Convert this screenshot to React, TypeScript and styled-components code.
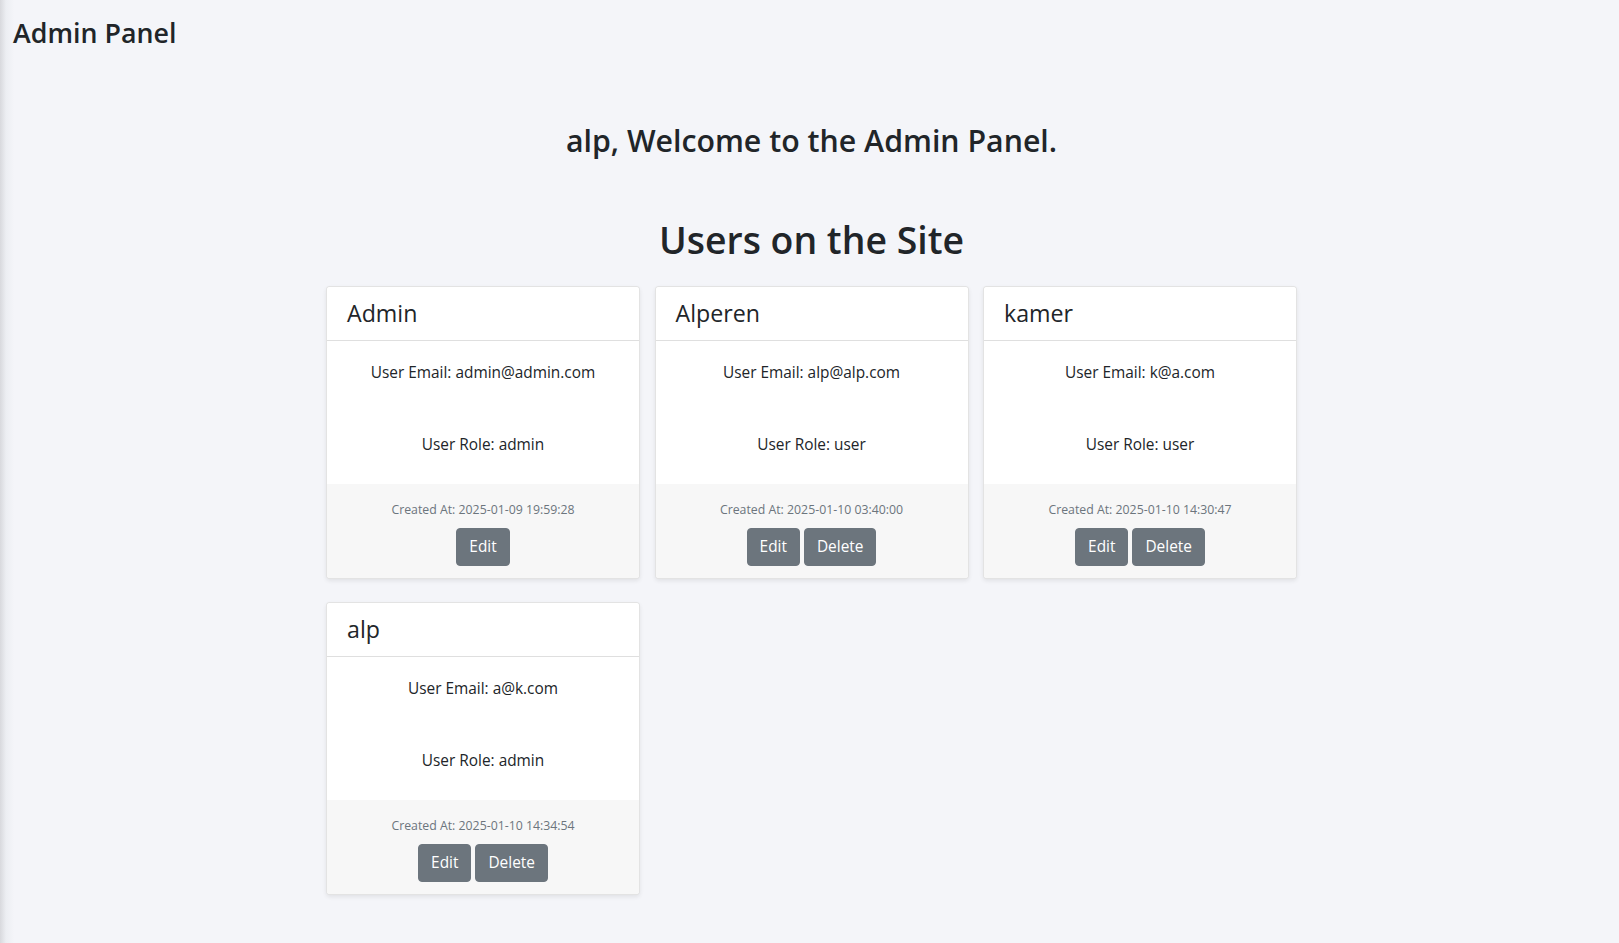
import React from "react";
import styled, { createGlobalStyle } from "styled-components";

const GlobalStyle = createGlobalStyle`
  html, body {
    margin: 0;
    padding: 0;
  }
  body {
    background: #f4f5f9;
    font-family: "Open Sans", "Noto Sans", "Liberation Sans", sans-serif;
    color: #212529;
  }
  * { box-sizing: border-box; }
`;

const Page = styled.div`
  min-height: 100vh;
  background: linear-gradient(to right, #d8d9dd 0px, #eceef2 6px, #f4f5f9 14px);
  padding-bottom: 40px;
`;

const Brand = styled.div`
  font-size: 26.8px;
  line-height: 34px;
  padding: 16px 0 0 13px;
  font-weight: 600;
`;

const Welcome = styled.h2`
  margin: 72px 0 0;
  padding-left: 4px;
  font-size: 30.3px;
  line-height: 38px;
  font-weight: 600;
  text-align: center;
`;

const Title = styled.h1`
  margin: 56px 0 0;
  padding-left: 4px;
  font-size: 37.4px;
  line-height: 48px;
  font-weight: 600;
  text-align: center;
`;

const Grid = styled.div`
  margin-top: 22px;
  padding-left: 4px;
  display: grid;
  grid-template-columns: repeat(3, 314px);
  column-gap: 14.5px;
  row-gap: 23.5px;
  justify-content: center;
`;

const Card = styled.div`
  background: #fff;
  border: 1px solid rgba(0, 0, 0, 0.11);
  border-radius: 4px;
  box-shadow: 0 2px 4px rgba(0, 0, 0, 0.08);
  overflow: hidden;
  display: flex;
  flex-direction: column;
`;

const CardHeader = styled.div`
  padding: 12px 20px;
  border-bottom: 1px solid rgba(0, 0, 0, 0.125);
  background: #fff;
`;

const CardName = styled.h4`
  margin: 0;
  font-size: 23.2px;
  line-height: 28.8px;
  font-weight: 400;
`;

const CardBody = styled.div`
  padding: 20px 20px 27px;
  text-align: center;
  display: flex;
  flex-direction: column;
  gap: 48px;
`;

const InfoLine = styled.p`
  margin: 0;
  font-size: 15.4px;
  line-height: 24px;
`;

const CardFooter = styled.div`
  padding: 14px 20px 12px;
  background: #f7f7f7;
  text-align: center;
`;

const Created = styled.p`
  margin: 0 0 6px;
  font-size: 12.3px;
  line-height: 24px;
  color: #6c757d;
`;

const Actions = styled.div`
  display: flex;
  justify-content: center;
  gap: 4px;
`;

const Button = styled.button`
  font-family: inherit;
  font-size: 15.4px;
  line-height: 24px;
  padding: 6px 12px;
  border: 1px solid #6c757d;
  border-radius: 4px;
  background: #6c757d;
  color: #fff;
  cursor: pointer;
`;

type User = {
  name: string;
  email: string;
  role: string;
  created: string;
  deletable: boolean;
};

const users: User[] = [
  { name: "Admin", email: "admin@admin.com", role: "admin", created: "2025-01-09 19:59:28", deletable: false },
  { name: "Alperen", email: "alp@alp.com", role: "user", created: "2025-01-10 03:40:00", deletable: true },
  { name: "kamer", email: "k@a.com", role: "user", created: "2025-01-10 14:30:47", deletable: true },
  { name: "alp", email: "a@k.com", role: "admin", created: "2025-01-10 14:34:54", deletable: true },
];

export default function App() {
  return (
    <>
      <GlobalStyle />
      <Page>
        <Brand>Admin Panel</Brand>
        <Welcome>alp, Welcome to the Admin Panel.</Welcome>
        <Title>Users on the Site</Title>
        <Grid>
          {users.map((u) => (
            <Card key={u.name}>
              <CardHeader>
                <CardName>{u.name}</CardName>
              </CardHeader>
              <CardBody>
                <InfoLine>User Email: {u.email}</InfoLine>
                <InfoLine>User Role: {u.role}</InfoLine>
              </CardBody>
              <CardFooter>
                <Created>Created At: {u.created}</Created>
                <Actions>
                  <Button>Edit</Button>
                  {u.deletable && <Button>Delete</Button>}
                </Actions>
              </CardFooter>
            </Card>
          ))}
        </Grid>
      </Page>
    </>
  );
}
